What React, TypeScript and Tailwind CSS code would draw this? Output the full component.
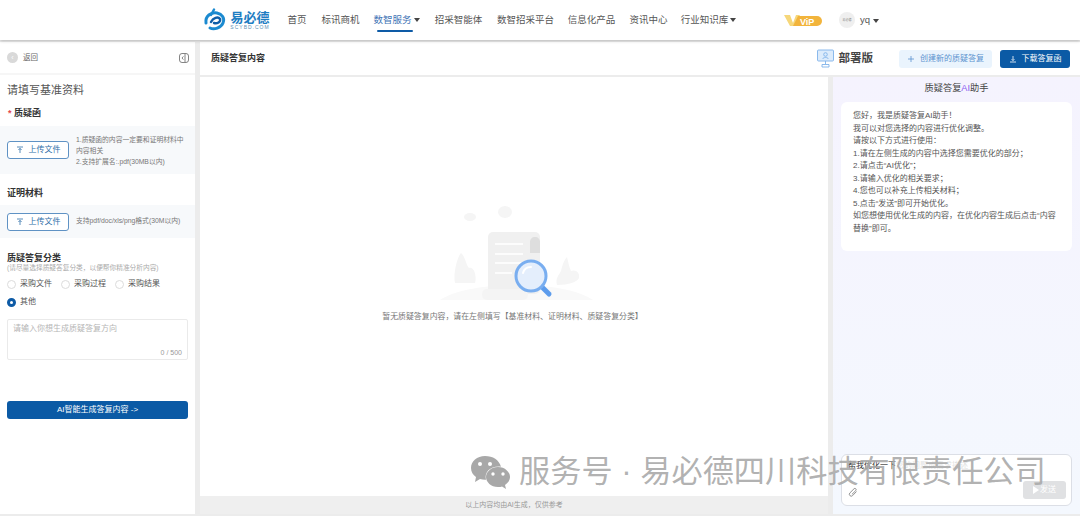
import React from "react";

const F = { fontFamily: '"Liberation Sans", "Noto Sans CJK SC", sans-serif' };

function Caret() {
  return <span className="ml-[2px] inline-block h-0 w-0 border-x-[3px] border-t-[4px] border-x-transparent border-t-[#444] align-middle" />;
}

function Logo() {
  return (
    <div className="flex items-center">
      <svg width="24" height="24" viewBox="0 0 24 24" fill="none">
        <path d="M3 15C2 8 8 4 14 5c5 1 8 5 6 10-2 5-9 7-13 5" stroke="#1b8ad0" strokeWidth="3" strokeLinecap="round" />
        <path d="M8 14c2-4 7-6 9-3 1 3-3 5-6 4" stroke="#0f5ea8" strokeWidth="2.4" strokeLinecap="round" />
        <path d="M11 1.5 8 7" stroke="#1b8ad0" strokeWidth="2.4" strokeLinecap="round" />
      </svg>
      <div className="ml-[1px] flex w-[44px] flex-col items-center">
        <span className="text-[13px] font-bold leading-[13px] text-[#1e7dc2]">易必德</span>
        <span className="text-[5px] leading-[6px] tracking-[1px] text-[#5d8fb5]">SCYBD.COM</span>
      </div>
    </div>
  );
}

function Nav({ children, active, caret, w }: { children: React.ReactNode; active?: boolean; caret?: boolean; w: string }) {
  return (
    <div className={`relative flex h-[40px] items-center justify-center whitespace-nowrap text-[9.5px] ${w} ${active ? "text-[#3f74b5]" : "text-[#555]"}`}>
      {children}
      {caret && <Caret />}
      {active && <div className="absolute bottom-[8px] left-[2px] h-[2px] w-[36px] rounded bg-[#0e5ba6]" />}
    </div>
  );
}

function Header() {
  return (
    <header className="relative z-10 flex h-[40px] items-center bg-white pl-[203px] shadow-[0_1px_3px_rgba(0,0,0,0.22)]">
      <div className="w-[85px]"><Logo /></div>
      <Nav w="w-[18px]">首页</Nav>
      <Nav w="w-[37px] ml-[16px]">标讯商机</Nav>
      <Nav w="w-[43px] ml-[16px]" active caret>数智服务</Nav>
      <Nav w="w-[45px] ml-[18px]">招采智能体</Nav>
      <Nav w="w-[55px] ml-[17px]">数智招采平台</Nav>
      <Nav w="w-[45px] ml-[16px]">信息化产品</Nav>
      <Nav w="w-[37px] ml-[16px]">资讯中心</Nav>
      <Nav w="w-[51px] ml-[16px]" caret>行业知识库</Nav>
      <div className="ml-[50px] flex h-[13px] w-[39px] items-center">
        <svg width="39" height="13" viewBox="0 0 39 13">
          <path d="M0 1h6l3 8 3-8h4l-6 11H6z" fill="#f6d77a" />
          <path d="M14 2h19a5 5 0 0 1 0 10H9z" fill="#f2b43c" />
          <text x="16" y="10.5" fontSize="9" fontWeight="700" fill="#fff" fontFamily="Liberation Sans">ViP</text>
        </svg>
      </div>
      <div className="ml-[16px] flex h-[16px] w-[16px] items-center justify-center rounded-full bg-[#efefef] text-[3px] text-[#888]">易必德</div>
      <span className="ml-[5px] text-[9.5px] text-[#555]">yq</span>
      <span className="ml-[1px]"><Caret /></span>
    </header>
  );
}

function UploadBtn() {
  return (
    <button className="flex h-[18px] w-[62px] shrink-0 items-center justify-center gap-[5px] rounded-[3px] border border-[#5f92c4] bg-white text-[8px] text-[#2f6ea8]">
      <svg width="8" height="8" viewBox="0 0 8 8" fill="none" stroke="#2f6ea8" strokeWidth="0.8"><path d="M1 1h6M4 7V2.4M2.4 4 4 2.4 5.6 4" /></svg>
      上传文件
    </button>
  );
}

function Radio({ label, on, w }: { label: string; on?: boolean; w?: string }) {
  return (
    <div className={`flex items-center gap-[4px] ${w ?? ""}`}>
      {on ? (
        <span className="h-[9px] w-[9px] rounded-full border-[3px] border-[#0e5ba6] bg-white" />
      ) : (
        <span className="h-[9px] w-[9px] rounded-full border border-[#dcdcdc] bg-white" />
      )}
      <span className="text-[8px] text-[#555]">{label}</span>
    </div>
  );
}

function LeftPanel() {
  return (
    <aside className="flex w-[195px] shrink-0 flex-col bg-white">
      <div className="flex h-[33px] items-center justify-between border-b-2 border-[#f6f6f6] pl-[7px] pr-[6px]">
        <div className="flex items-center gap-[5px]">
          <span className="flex h-[11px] w-[11px] items-center justify-center rounded-full bg-[#d9d9d9] text-[7px] leading-none text-white">‹</span>
          <span className="text-[7.5px] text-[#666]">返回</span>
        </div>
        <svg width="10" height="10" viewBox="0 0 10 10" fill="none" stroke="#666" strokeWidth="0.8">
          <rect x="0.5" y="0.5" width="9" height="9" rx="2.5" />
          <path d="M6 1v8M4.4 3.4 3 5l1.4 1.6" />
        </svg>
      </div>
      <h2 className="mt-[6px] pl-[7px] text-[11px] font-normal leading-[18px] text-[#555]">请填写基准资料</h2>
      <div className="mt-[7px] pl-[8px] text-[9px] font-bold leading-[14px] text-[#333]">
        <span className="text-[#e5484d]">*</span> 质疑函
      </div>
      <div className="mt-[6px] flex h-[48px] items-center gap-[7px] bg-[#f7f9fb] pl-[7px] pr-[8px]">
        <UploadBtn />
        <p className="text-[6.8px] leading-[11px] text-[#777]">1.质疑函的内容一定要和证明材料中内容相关<br />2.支持扩展名:.pdf(30MB以内)</p>
      </div>
      <div className="mt-[12px] pl-[7px] text-[9px] font-bold leading-[14px] text-[#333]">证明材料</div>
      <div className="mt-[5px] flex h-[33px] items-center gap-[7px] bg-[#f7f9fb] pl-[7px]">
        <UploadBtn />
        <p className="whitespace-nowrap text-[6.8px] text-[#777]">支持pdf/doc/xls/png格式(30M以内)</p>
      </div>
      <div className="mt-[14px] pl-[7px] text-[9px] font-bold leading-[12px] text-[#333]">质疑答复分类</div>
      <div className="-mt-[1px] pl-[7px] text-[6.7px] leading-[9px] text-[#aaa]">(请尽量选择质疑答复分类，以便帮你精准分析内容)</div>
      <div className="mt-[6px] flex pl-[7px]">
        <Radio label="采购文件" w="w-[54px]" />
        <Radio label="采购过程" w="w-[54px]" />
        <Radio label="采购结果" />
      </div>
      <div className="mt-[6px] pl-[7px]"><Radio label="其他" on /></div>
      <div className="relative mx-[7px] mt-[11px] h-[41px] rounded-[2px] border border-[#eaeaea] bg-white px-[5px] py-[2px] text-[8px] leading-[13px] text-[#b5b5b5]">
        请输入你想生成质疑答复方向
        <span className="absolute bottom-[2px] right-[5px] text-[7px] leading-[9px] text-[#999]">0 / 500</span>
      </div>
      <button className="mx-[7px] mt-[41px] flex h-[18px] items-center justify-center rounded-[3px] bg-[#0b5aa5] text-[8px] text-white">AI智能生成答复内容 -&gt;</button>
    </aside>
  );
}

function EmptyIllustration() {
  return (
    <svg width="160" height="100" viewBox="0 0 160 100" fill="none">
      <path d="M3 95c30-20 125-20 153 0z" fill="#f9f9f9" />
      <ellipse cx="33" cy="12" rx="6" ry="4" fill="#f5f5f5" />
      <ellipse cx="68" cy="7" rx="7" ry="6" fill="#f5f5f5" />
      <path d="M18 78c-2-8 2-26 6-30 4 3 5 12 8 15 5-2 8 8 6 15z" fill="#f5f5f5" />
      <path d="M120 80c-2-7 2-10 4-14 1-5 3-11 6-14 1 4 2 10 4 14 5-2 9 2 8 7-2 4-10 7-22 7z" fill="#f5f5f5" />
      <rect x="51" y="27" width="52" height="62" rx="5" fill="#f0f0f0" />
      <rect x="45" y="84" width="46" height="11" rx="5" fill="#f4f4f4" />
      <path d="M93 48V37c0-3 2-5 5-5s5 2 5 5v11z" fill="#dedede" />
      <path d="M58 39h28M58 49h28M58 58h28M58 68h17" stroke="#fff" strokeWidth="1.6" />
      <path d="M105 82l7 7" stroke="#5d9cec" strokeWidth="5" strokeLinecap="round" />
      <circle cx="94" cy="71" r="15" fill="#e4eefc" stroke="#79aef0" strokeWidth="3" />
      <path d="M86 68c1-4 4-6 8-6" stroke="#fff" strokeWidth="2" strokeLinecap="round" />
    </svg>
  );
}

function Assistant() {
  const lines = [
    "您好，我是质疑答复AI助手！",
    "我可以对您选择的内容进行优化调整。",
    "请按以下方式进行使用：",
    "1.请在左侧生成的内容中选择您需要优化的部分；",
    "2.请点击“AI优化”；",
    "3.请输入优化的相关要求；",
    "4.您也可以补充上传相关材料；",
    "5.点击“发送”即可开始优化。",
    "如您想使用优化生成的内容，在优化内容生成后点击“内容替换”即可。",
  ];
  return (
    <aside className="flex w-[247px] shrink-0 flex-col bg-gradient-to-b from-[#f5f3fe] to-[#f4f8fe]">
      <div className="flex h-[23px] items-center justify-center text-[9.2px] text-[#444]">
        质疑答复<span className="text-[#8a5cf0]">AI</span>助手
      </div>
      <div className="ml-[8px] mr-[8px] mt-[2px] h-[149px] rounded-[6px] bg-white pb-[10px] pl-[12px] pr-[16px] pt-[8px] text-[8px] leading-[12.5px] text-[#555]">
        {lines.map((l) => <div key={l}>{l}</div>)}
      </div>
      <div className="flex-1" />
      <div className="relative mb-[8px] ml-[8px] mr-[8px] h-[52px] rounded-[6px] border border-[#dcdfe6] bg-white">
        <span className="absolute left-[6px] top-[5px] text-[8px] leading-[12px] text-[#333]">帮我优化一下</span>
        <span className="absolute left-[54px] top-[5px] text-[8px] leading-[12px] text-[#e2e2e2]">您的问题或需求描述</span>
        <svg className="absolute bottom-[7px] left-[6px]" width="10" height="11" viewBox="0 0 10 11" fill="none" stroke="#888" strokeWidth="0.9">
          <path d="M8.5 4.5 4.6 8.6a1.9 1.9 0 0 1-2.7-2.7L6 1.8a1.2 1.2 0 0 1 1.8 1.7L3.9 7.4" />
        </svg>
        <button className="absolute bottom-[6px] right-[5px] flex h-[18px] w-[43px] items-center justify-center gap-[1px] rounded-[3px] bg-[#e0e1e3] text-[8px] text-white">
          <span className="h-0 w-0 border-y-[4px] border-l-[6px] border-y-transparent border-l-white" />发送
        </button>
      </div>
    </aside>
  );
}

export default function App() {
  return (
    <div className="relative flex h-[516px] w-[1080px] flex-col overflow-hidden bg-[#ececec]" style={F}>
      <Header />
      <div className="mt-[2px] flex min-h-0 flex-1 pb-[2px]">
        <LeftPanel />
        <main className="ml-[5px] flex min-w-0 flex-1 flex-col">
          <div className="flex h-[33px] items-center bg-white pl-[11px] pr-[10px]">
            <span className="text-[9px] font-bold text-[#333]">质疑答复内容</span>
            <div className="flex-1" />
            <svg width="17" height="19" viewBox="0 0 17 19" fill="none" stroke="#7fb2ea" strokeWidth="0.9">
              <rect x="0.5" y="1" width="16" height="11" rx="1" fill="#dcebfb" />
              <circle cx="8.5" cy="5.5" r="1.8" />
              <path d="M5.5 10c1-2 5-2 6 0M8.5 12v3M5 15.5h7v2.5H5z" />
            </svg>
            <span className="ml-[5px] text-[11.5px] font-bold text-[#444]">部署版</span>
            <button className="ml-[26px] flex h-[18px] w-[93px] items-center justify-center gap-[5px] rounded-[3px] bg-[#eaf4fd] text-[8px] text-[#5c93cf]">
              <svg width="8" height="8" viewBox="0 0 8 8" stroke="#5c93cf" strokeWidth="0.8"><path d="M4 1v6M1 4h6" /></svg>
              创建新的质疑答复
            </button>
            <button className="ml-[8px] flex h-[18px] w-[70px] items-center justify-center gap-[5px] rounded-[3px] bg-[#0b5aa5] text-[8px] text-white">
              <svg width="8" height="8" viewBox="0 0 8 8" fill="none" stroke="#fff" strokeWidth="0.8"><path d="M1 7h6M4 1v4.4M2.6 4.2 4 5.6l1.4-1.4" /></svg>
              下载答复函
            </button>
          </div>
          <div className="mt-[2px] flex min-h-0 flex-1 gap-[5px]">
            <section className="flex min-w-0 flex-1 flex-col bg-white">
              <div className="flex flex-1 flex-col items-center pt-[128px]">
                <div className="ml-[6px]"><EmptyIllustration /></div>
                <p className="-ml-[3px] mt-[6px] text-[7.9px] text-[#777]">暂无质疑答复内容，请在左侧填写【基准材料、证明材料、质疑答复分类】</p>
              </div>
              <div className="flex h-[18px] items-center justify-center bg-[#efefef] text-[7px] text-[#999]">以上内容均由AI生成，仅供参考</div>
            </section>
            <Assistant />
          </div>
        </main>
      </div>
      <div className="absolute left-[470px] top-[452px] flex items-center text-[31.2px] leading-[40px] text-[#a8a8a8]/90">
        <svg width="41" height="36" viewBox="0 0 41 36" className="mr-[8px]">
          <path d="M15 2C7 2 1 7 1 14c0 4 2 7 5 9l-1 5 5-3c2 .6 4 .8 6 .7-2-8 5-14 15-13C29 6 23 2 15 2z" fill="#a8a8a8" />
          <path d="M28 13c-7 0-12 5-12 10s5 10 12 10c2 0 3 0 4-.5l4 2.5-1-4c3-2 5-5 5-8 0-5-5-10-12-10z" fill="#a8a8a8" />
          <circle cx="10" cy="10" r="2" fill="#fff" /><circle cx="20" cy="10" r="2" fill="#fff" />
          <circle cx="23" cy="20" r="1.7" fill="#fff" /><circle cx="33" cy="20" r="1.7" fill="#fff" />
        </svg>
        服务号 · 易必德四川科技有限责任公司
      </div>
    </div>
  );
}
